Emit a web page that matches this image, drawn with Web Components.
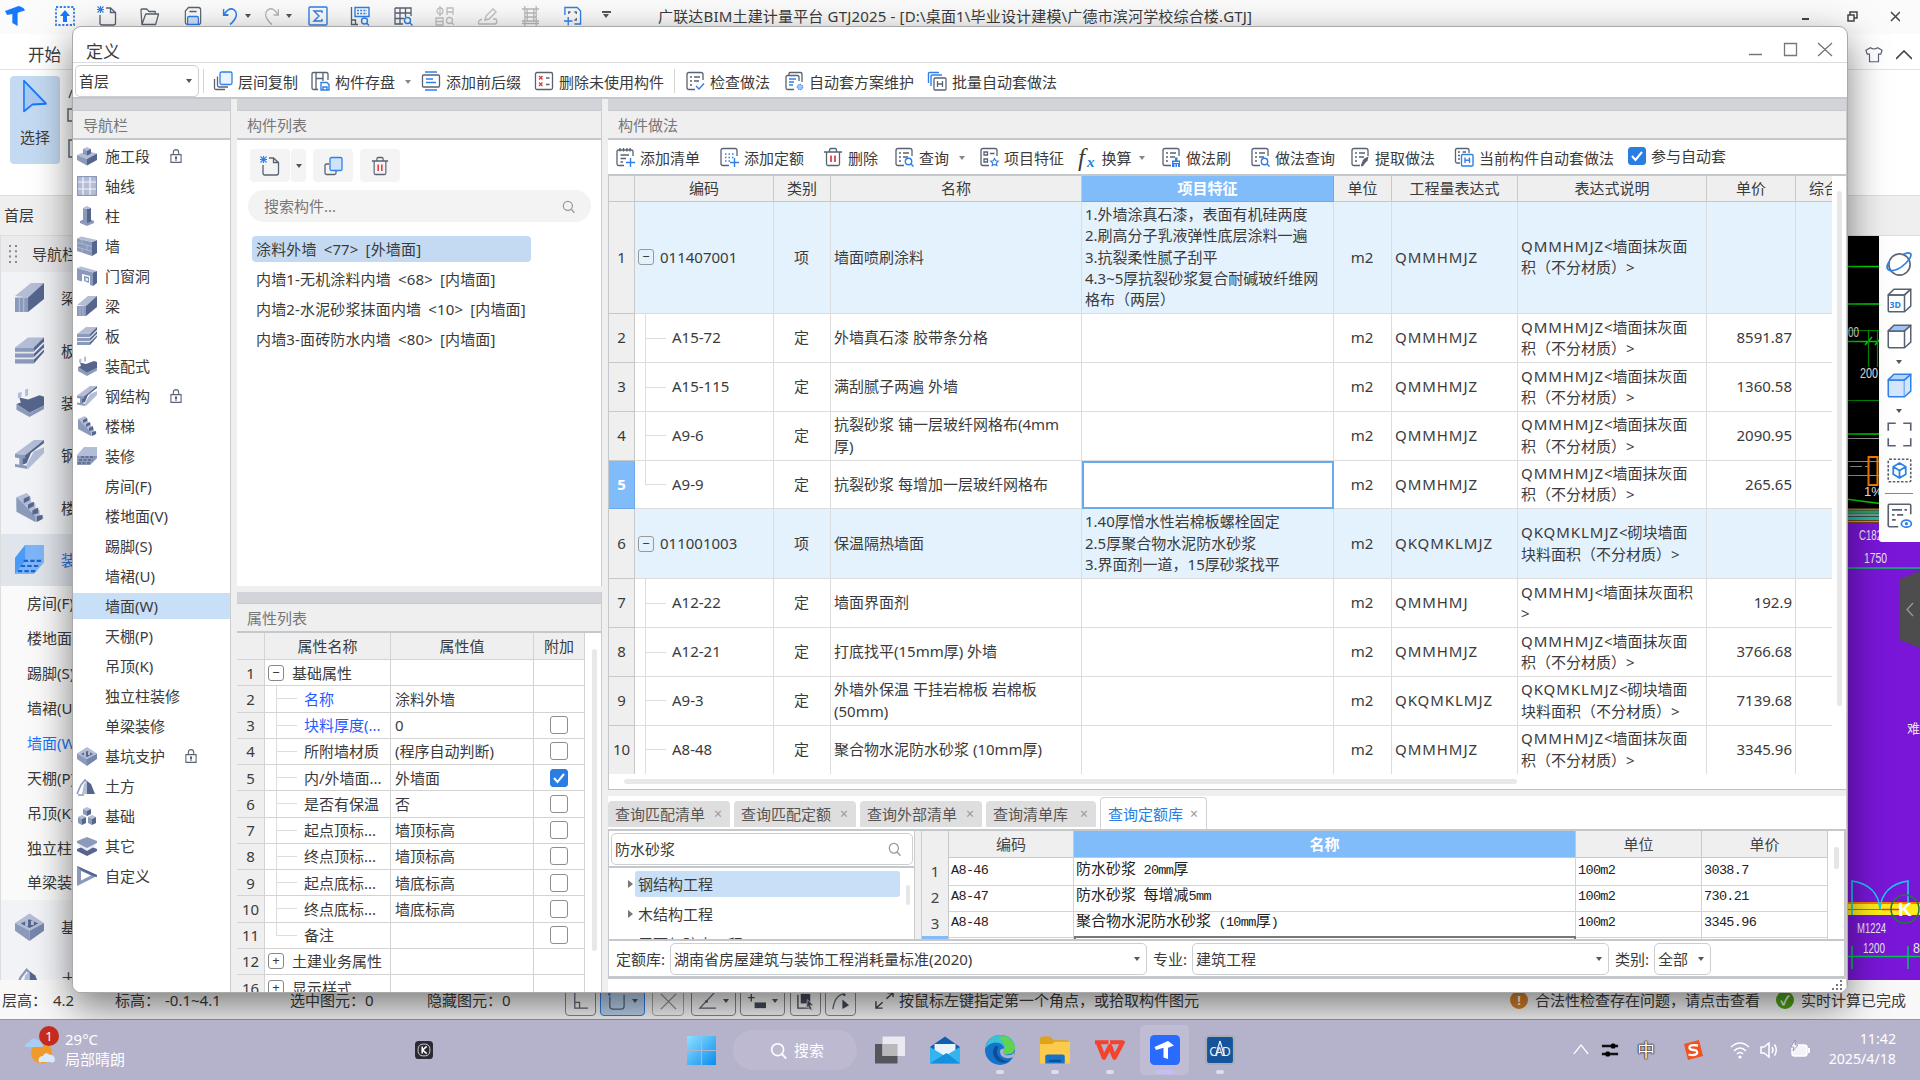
<!DOCTYPE html>
<html lang="zh-CN">
<head>
<meta charset="utf-8">
<title>广联达BIM土建计量平台 GTJ2025</title>
<style>
    html, body {
        margin: 0;
        width: 1920px;
        height: 1080px;
        overflow: hidden;
        font-family: "Noto Sans", "Noto Sans CJK SC", sans-serif;
        font-size: 15px;
        line-height: 20px;
        color: #3b3b3b;
        --line: #c4c8cd;
        --cell: #dcdcdc;
        --head: #efefef;
        --pick: #c8dff8;
        --blue: #2a7de1;
    }
</style>
</head>
<body>
<desk-top></desk-top>
<script>
/* ICONOS: viewBox 20x20 */
const G = 'fill="none" stroke="#596273" stroke-width="1.3"';
const B = 'fill="none" stroke="#2f80e8" stroke-width="1.4"';
const L = '#b3bdd5', M = '#8b99ba', D = '#55658c';
const page = `<path ${G} d="M18 9V3.500Q18 1.500 16 1.500H4Q2 1.500 2 3.500V16.500Q2 18.500 4 18.500H10"/>`;
const lines = `<path ${G} d="M5 6h2M9 6h6M5 10h2M9 10h5M5 14h2"/>`;
const cube = (f, t, s = '#596273') => `<g fill="${f}" stroke="${s}" stroke-width="1.2" stroke-linejoin="round"><path d="M1 5.500H14V19H2.500Q1 19 1 17.500Z"/><path d="M14 5.500L19 1V14.500L14 19"/><path fill="${t}" d="M1 5.500L5.500 1H19L14 5.500Z"/></g>`;

const ICONS = {
    logo: '<path fill="#1677ff" d="M0 5L13 0Q15 0 18 2.500L19 4.500L14 6L12 7V20L7 17V8L2 9Z"/>',
    upload: '<rect x="1" y="1" width="18" height="18" fill="none" stroke="#2f80e8" stroke-width="1.800" stroke-dasharray="2.200 1.600"/><path fill="#1677ff" d="M10 4l5 6h-3v6H8v-6H5z"/>',
    newfile: `<path ${G} d="M3 9V17Q3 19 5 19H16.500Q18.500 19 18.500 17V6.500L13.500 2H9M13.500 2V6.500H18.500"/><path stroke="#2f80e8" stroke-width="1.100" d="M3.500 0v7M0 3.500h7M.5 .5l6 6M6.500 .5l-6 6"/>`,
    open: `<path ${G} stroke-linejoin="round" d="M2 18L1 4Q1 3 2 3H7L9.500 5.500H16V8M2 18.500L6 8H19.500L16.500 18.500Z"/>`,
    save: `<path ${G} d="M4 18.500Q1.500 18.500 1.500 16V5L5 1.500H16Q18.500 1.500 18.500 4V16Q18.500 18.500 16 18.500M6 5.500H14"/><path fill="#cfe3fb" stroke="#2f80e8" stroke-width="1.400" d="M4 18.500V12Q4 10.500 5.500 10.500H14.500Q16 10.500 16 12V18.500Z"/>`,
    undo: '<path fill="none" stroke="#2f80e8" stroke-width="1.800" d="M2 3V9H8M2.500 8.500Q8 2 13 3Q18 4.500 18 9Q17 14 10 18.500"/>',
    redo: '<path fill="none" stroke="#b5b5b5" stroke-width="1.500" d="M18 3V9H12M17.500 8.500Q12 2 7 3Q2 4.500 2 9Q3 14 10 18.500"/>',
    sigma: `<rect x="1" y="1" width="18" height="18" rx="1" ${B}/><path ${B} d="M14 7V5H6L11 10L6 15H14V13"/>`,
    calc: `<path ${G} d="M1.500 1V18.500H8M1.500 14H5.500V18"/><path ${B} d="M5 1.500H19V10.500H5Z"/><path ${B} stroke-dasharray="2 1.200" d="M7 4.500H17M7 7.500H17"/><circle cx="14.500" cy="15" r="3" ${B}/><path ${B} d="M16.500 17l2.500 2.500"/>`,
    gridfind: `<path ${G} d="M2 2H18V10M2 2V18H10M2 7H18M2 12.500H11M7 2V18M12.500 2V11"/><circle cx="14.500" cy="14.500" r="3" ${B}/><path ${B} d="M16.500 16.500l3 3"/>`,
    shapes: '<g fill="none" stroke="#c1c1c1" stroke-width="1.300"><circle cx="5" cy="5" r="3"/><path d="M12 9V2H18V9M12 6H18M1 12H8V19H1ZM1 15.500H8M5 0V10"/><circle cx="14.500" cy="14.500" r="3"/><path d="M17 17l2 2"/></g>',
    pencil: '<path fill="none" stroke="#c1c1c1" stroke-width="1.400" d="M7 14L8 10L15 3L18 6L11 13ZM4 13Q-1 15 1 18H17Q20 17 18 13H15"/>',
    fence: '<path fill="none" stroke="#b9b9b9" stroke-width="1.300" d="M4 0V20M16 0V20M1 3H19M1 15H19M4 7H16M4 11H16M6.500 3V15M13.500 3V15M1 17.500H19"/>',
    capture: `<path ${B} stroke-width="1.700" d="M2 9V1.500H15L18.500 5V18H12M5.500 11V19.500M1 15H10"/><path ${G} d="M6 8V6H8M12 6H14V8M14 12V14H12"/>`,
    copyfloor: `<path ${G} d="M1.500 8V17Q1.500 18.500 3 18.500H12M4.500 5.500V14.500Q4.500 16 6 16H15"/><rect x="7" y="1" width="12" height="12.500" rx="1.500" fill="#eaf3ff" stroke="#2f80e8" stroke-width="1.300"/>`,
    store: `<path ${G} d="M18 9V3Q18 1.500 16.500 1.500H3.500Q2 1.500 2 3V17Q2 18.500 3.500 18.500H8M6 1.500V18M6 7.500H13V1.500M13 7.500V10"/><path ${B} d="M11 19V11.500H17L19 13.500V19ZM13 19V16H17V19"/>`,
    prefix: `<rect x="1.500" y="4" width="17" height="12" rx="1" ${G}/><path ${B} d="M4 1H16M4 19H16M5 8H12M5 11.500H15"/>`,
    delunused: `<rect x="1.500" y="1.500" width="17" height="17" rx="1.500" ${G}/><path stroke="#e0373c" stroke-width="1.300" d="M5 5l3.500 3.500M8.500 5L5 8.500M5 11.500l3.500 3.500M8.500 11.500L5 15"/><path ${G} d="M12 7H15.500M12 13.500H15.500"/>`,
    check: `${page}${lines}<path ${B} stroke-width="2" d="M11 15L14 18L19 12.500"/>`,
    autoplan: `<path ${G} d="M5 4V2.500Q5 1.500 6 1.500H16.500Q18 1.500 18 3V11M15 10V6Q15 4.500 13.500 4.500H3.500Q2 4.500 2 6V17Q2 18.500 3.500 18.500H10"/><path ${B} d="M5 8H12M5 11H10M5 14H9"/><circle cx="16" cy="16" r="2.800" fill="#9dc6f8" stroke="#2f80e8" stroke-dasharray="1.500 1"/>`,
    batchauto: `<path ${B} d="M1.500 12V2.500Q1.500 1.500 2.500 1.500H12M4 15V5Q4 4 5 4H15"/><rect x="7" y="7" width="12" height="12" rx="1" ${G}/><path ${G} d="M10.500 10V16M15.500 10V16M10.500 13H15.500"/>`,
    addlist: `<path ${G} d="M18 9V4.500Q18 3 16.500 3H3.500Q2 3 2 4.500V17Q2 18.500 3.500 18.500H9M5 1V4.500M8.500 1V4.500M12 1V4.500M15 1V4.500M5.500 8H14M5.500 11.500H11M5.500 15H8"/><path ${B} stroke-width="1.800" d="M15.500 11V20M11 15.500H20"/>`,
    addquota: `${page}<path ${B} stroke-dasharray="1.500 2" d="M6 7H15M6 10.500H15M6 14H11"/><path ${B} stroke-width="1.800" d="M15.500 11V20M11 15.500H20"/>`,
    trash: `<path ${G} stroke-width="1.500" d="M1 5H19M6.500 5V3Q6.500 1.500 8 1.500H12Q13.500 1.500 13.500 3V5M3.500 5V17Q3.500 18.500 5 18.500H15Q16.500 18.500 16.500 17V5"/><path stroke="#e0373c" stroke-width="1.700" d="M8 8.500V15M12 8.500V15"/>`,
    query: `${page}${lines}<circle cx="14.500" cy="14.500" r="3.200" ${B}/><path ${B} d="M17 17l2.500 2.500"/>`,
    feature: `${page}<path ${G} d="M5 5h3.500v3H5zM11 6.500H15.500M5 12h3.500v3H5z"/><path fill="none" stroke="#2f80e8" stroke-width="1.100" d="M15.500 11.500l1.200 2.300 2.600.4-1.900 1.800.5 2.600-2.400-1.200-2.400 1.200.5-2.600-1.900-1.800 2.600-.4z"/>`,
    brush: `${page}${lines}<path fill="#2f80e8" d="M14 10.500h2.500v3H19V20H11V13.500H14z"/><path stroke="#fff" d="M12.500 15.500H18M14 17V20M16.500 17V20"/>`,
    extract: `${page}${lines}<path fill="#596273" d="M13 13L15 11L18.500 9.500L17.500 14L16 15L13 19L11 19.500L11 18z"/>`,
    currentauto: `<path ${G} d="M15 6V3Q15 1.500 13.500 1.500H3Q1.500 1.500 1.500 3V14.500Q1.500 16 3 16H6M4 5H6M4 8.500H6M4 12H6M8.500 5H12"/><rect x="7.500" y="7.500" width="11.500" height="11.500" rx="1" ${B}/><path ${B} d="M11 10.500V16M15.500 10.500V16M11 13.300H15.500"/>`,
    copy: `<path ${G} d="M6 8H3.500Q2 8 2 9.500V17Q2 18.500 3.500 18.500H11.500Q13 18.500 13 17V15"/><rect x="7" y="1.500" width="12" height="13" rx="1.500" fill="#cfe3fb" stroke="#2f80e8" stroke-width="1.300"/>`,
    find: '<circle cx="9" cy="9" r="7" fill="none" stroke="currentColor" stroke-width="1.900"/><path stroke="currentColor" stroke-width="2.100" d="M14 14L19 19.500"/>',
    lock: '<path fill="none" stroke="#596273" stroke-width="1.800" d="M1.500 8H18.500V19H1.500ZM5.500 8V5Q5.500 1 10 1Q14.500 1 14.500 5V8"/><circle cx="10" cy="12.500" r="2" fill="#596273"/><path stroke="#596273" stroke-width="1.800" d="M10 13v4"/>',
    cursor: '<path fill="#a9c9f0" stroke="#1677ff" stroke-width="1.200" stroke-linejoin="round" d="M1.500 1L18.500 14.500L8 15L1.500 19Z"/>',
    shirt: `<path ${G} d="M6 2Q10 5 14 2L19 5L17.500 9.500H15V18.500H5V9.500H2.500L1 5Z"/>`,

    /* elementos de obra */
    stage: `<path fill="${L}" d="M0 9L10 5L20 7.500L10 13Z"/><path fill="${M}" d="M0 9L10 13V19.500L0 14Z"/><path fill="${D}" d="M10 13L20 7.500V14L10 19.500Z"/><path fill="${M}" d="M6 3V8L10 9.500L14 8V3Z"/><path fill="${L}" d="M6 3L10 1L14 3L10 5Z"/><path fill="${D}" d="M10 5L14 3V7.500L10 9.500Z"/>`,
    axis: `<path fill="${L}" d="M0 0H20V20H0Z"/><path stroke="${M}" stroke-width="1.200" fill="none" d="M.6 .6H19.400V19.400H.6Z"/><path stroke="#f4f6fa" stroke-width="1.200" d="M6 1V19M13 1V19M1 6H19M1 13H19"/>`,
    column: `<path fill="${M}" d="M3 15L10 12L17 15V17L10 20L3 17Z"/><path fill="${M}" d="M6 2L10 3V17L6 15.500Z"/><path fill="${D}" d="M10 3L14 2V15.500L10 17Z"/><path fill="${L}" d="M6 2L10 0L14 2L10 3Z"/>`,
    wall: `<path fill="${M}" d="M0 2.500L15 6V20L0 15Z"/><path fill="${D}" d="M15 6L20 4V17L15 20Z"/><path fill="${L}" d="M0 2.500L4 .5L20 4L15 6Z"/><path stroke="${L}" stroke-width=".8" d="M0 6.500L15 10.500M0 11L15 15.500M5 4V8M10 9V14M5 12.500V16.500"/>`,
    opening: `<path fill="${M}" d="M0 2L16 6.500V20L13 19V10L5 8V15.500L0 14Z"/><path fill="${L}" d="M0 2L4 .5L20 5L16 6.500Z"/><path fill="${D}" d="M16 6.500L20 5V17L16 20Z"/><path fill="${M}" d="M7 10L12 11V17L7 15Z"/><path fill="#eef1f7" d="M8.500 12L11 12.500V15L8.500 14.500Z"/>`,
    beam: `<path fill="${L}" d="M0 9L11 0H20L9 10Z"/><path fill="${M}" d="M0 10H9V20H0Z"/><path fill="${D}" d="M9 10L20 0V11L9 20Z"/><path stroke="${L}" stroke-width=".8" d="M3 10V20M6 10V20"/>`,
    slab: `<path fill="${L}" d="M0 8L9 1H20L13 8Z"/><path fill="${M}" d="M0 8H13V19H0Z"/><path fill="${D}" d="M13 8L20 1V11L13 19Z"/><path stroke="#e3e8f2" stroke-width="1.200" fill="none" d="M0 11.500H13L20 4.500M0 15.500H13L20 8.500"/>`,
    prefab: `<path fill="${L}" d="M2 3.500L4.500 2.500V6L2 7ZM7 1L9 .5V5L7 6Z"/><path fill="${D}" d="M3 6.500L9 8L17 5L20 6V12L10 17L1 11L4 10Z"/><path fill="${M}" d="M1 11L10 17L20 12V14.500L10 20L1 15Z"/>`,
    steel: `<path fill="${L}" d="M0 9.500L13 0H20L7 10.500Z"/><path fill="${D}" d="M7 10.500L20 0V2L11 9L8 16L5 17V11Z"/><path fill="${M}" d="M0 9.500L7 10.500V12.500L5 13V17L8.500 18V20L0 18.500V16.500L3 17V12.500L0 12Z"/><path fill="${L}" d="M8 17L13 8L20 5V9L9 20Z"/>`,
    stairs: `<path fill="${L}" d="M1 3L8 0L11 3V6L14 7V10L17 12V15L20 17L14 20L1 10Z"/><path fill="${M}" d="M1 3V13L14 20V16Z"/><path fill="${D}" d="M6 4L10 2V5L6 7ZM9 8L13 6V9L9 11ZM12 12L16 10V14L12 15ZM15 16L19 15V18L15 20Z"/>`,
    finish: `<path fill="${L}" d="M0 9L7 1H20V12L13 19H0Z"/><path fill="${M}" d="M0 10H20V12L13 19H0Z"/><path stroke="${D}" stroke-width="1.300" stroke-dasharray="3 1.500" d="M4 11H18M2 14H16M1 17H14"/>`,
    finishon: '<path fill="#7db6f8" d="M0 9L7 0H20V12L13 20H0Z"/><path fill="#4b9af5" d="M0 9L7 0V11L0 20Z"/><path stroke="#1b62cf" stroke-width="1.500" stroke-dasharray="3 1.500" d="M6 11H19M4 14.500H17M2 18H14"/>',
    pit: `<path fill="${L}" d="M0 7.500L10 1L20 7.500L10 13Z"/><path fill="${M}" d="M0 7.500L10 13V20L0 13Z"/><path fill="#7686ab" d="M10 13L20 7.500V13L10 20Z"/><path fill="${D}" d="M4 8L10 5L16 8L10 11Z"/><path fill="${L}" d="M7 5h2v5H7zM11 6h2v3h-2z"/>`,
    earth: `<path fill="none" stroke="${M}" stroke-width="1.600" d="M0 18L4 9L8 4L11 7M1 19H7"/><path fill="${D}" d="M10 5L14 8L18 18H10Z"/><path fill="${L}" d="M7 8L10 5V18H5Z"/>`,
    base: `<g fill="${L}"><path d="M6 3L10 1L14 3L10 5ZM1 11L5 9L9 11L5 13ZM11 11L15 9L19 11L15 13Z"/></g><g fill="${M}"><path d="M6 3L10 5V10L6 8ZM1 11L5 13V19L1 17ZM11 11L15 13V19L11 17Z"/></g><g fill="${D}"><path d="M14 3L10 5V10L14 8ZM9 11L5 13V19L9 17ZM19 11L15 13V19L19 17Z"/></g>`,
    other: `<path fill="${D}" d="M0 13L10 9L20 13V15L10 20L0 15Z"/><path fill="#e8ebf3" d="M0 9L20 9L10 15Z"/><path fill="${M}" d="M0 5L10 1L20 5V7L10 12L0 7Z"/>`,
    custom: `<path fill="${M}" d="M0 0L20 9V10L0 20Z"/><path fill="${D}" d="M0 0L20 9V11L16 10L4 4Z"/><path fill="#fff" d="M4 5L14 9.500L4 14.500Z"/>`,

    /* barra de vistas */
    orbit: `<circle cx="10" cy="10" r="8.500" ${G} stroke-width="1.200"/><path fill="none" stroke="#2f80e8" stroke-width="1.400" d="M1.500 8Q-2 14 3 15Q9 15 15 9Q20 4 19 1.500Q17-.5 13 2"/>`,
    cube3d: `${cube('none', 'none')}<text x="2" y="16" font-size="7" font-weight="700" font-family="Noto Sans" fill="#2f80e8">3D</text>`,
    cubetop: cube('none', '#9dc6f8'),
    cubefull: cube('#d3e6fd', '#b5d5fb', '#2f80e8'),
    frame: `<path ${G} d="M1 7V1H7M13 1H19V7M19 13V19H13M7 19H1V13"/>`,
    isolate: `<rect x="1" y="1" width="18" height="18" rx="1" ${G} stroke-dasharray="2 1.300"/><path ${B} stroke-linejoin="round" d="M10 4L15 7V13L10 16L5 13V7ZM5 7L10 10L15 7M10 10V16"/>`,
    eyelist: `<path ${G} d="M19 9V2Q19 1 18 1H2Q1 1 1 2V18Q1 19 2 19H9M4 5.500h8M14 5.500h2M4 9.500h2M8 9.500h5M4 13.500h3"/><ellipse cx="15.500" cy="16.500" rx="4" ry="2.800" ${B}/><circle cx="15.500" cy="16.500" r="1.300" fill="#2f80e8"/>`,

    /* barra de estado */
    st1: `<path ${G} d="M4 1V17H18M4 11H9V17"/>`,
    st2: `<path ${G} d="M3 5V15Q3 18 6 18H15Q18 18 18 15V3"/><circle cx="2.500" cy="2.500" r="1.500" fill="#2f80e8"/>`,
    st3: `<path ${G} d="M2 2L18 18M18 2L2 18"/>`,
    st4: `<path ${G} d="M17 1L2 17H19"/><circle cx="9" cy="10" r="1.500" fill="#596273"/>`,
    st5: '<path stroke="#444c5a" stroke-width="1.400" d="M1 6H8M4.500 2V10"/><path fill="#444c5a" d="M8 11H20V17H8z"/>',
    st6: '<path fill="none" stroke="#444c5a" stroke-width="1.400" d="M2 3V17H14"/><path fill="#444c5a" d="M5 2H15V12H5z"/><path fill="#444c5a" stroke="#ccc" d="M12 8l6 6h-3l2 5-3-1-1-3-2 2z"/>',
    st7: `<path ${G} d="M2 18Q4 3 14 2"/><circle cx="14" cy="3" r="1.500" fill="#596273"/><path fill="#444c5a" d="M12 8L19 14L12 18z"/>`,
    arrows: '<path fill="none" stroke="#444" stroke-width="1.500" d="M1 11V19H8M1.500 18.500L8 12M19 6V1H13M18.500 1.500L12 8"/>',

    /* barra de tareas */
    start: '<defs><linearGradient id="w" x2="1" y2="1"><stop stop-color="#8fe0ff"/><stop offset="1" stop-color="#0a8cf0"/></linearGradient></defs><path fill="url(#w)" d="M0 0H9.600V9.600H0ZM10.400 0H20V9.600H10.400ZM0 10.400H9.600V20H0ZM10.400 10.400H20V20H10.400Z"/>',
    tasks: '<path fill="#55565c" d="M0 6H15V19H0z"/><path fill="#f3f3f6" opacity=".85" d="M5 1H20V14H5z"/><path fill="#b9b9bd" d="M5 6H15V14H5z"/>',
    mail: '<path fill="#0f5fae" d="M0 8L10 1L20 8V12H0Z"/><path fill="#e9f3fb" d="M3 6H17V14H3z"/><path fill="#35b4f0" d="M0 8L10 14L20 8V19H0Z"/><path fill="#1590df" d="M0 19L11 12L20 19z"/>',
    edge: '<circle cx="10" cy="10" r="10" fill="#1673c9"/><path fill="#39c3d8" d="M1 6Q4 0 10 0Q19 0 20 8Q20 13 14 13Q11 12 13 9Q12 5 7 5Q3 5 0 9Z"/><path fill="#63d24d" d="M13 .5Q19 3 20 8Q20 13 14 13Q11 12 13 9Q14 5 9 2Z"/><path fill="#0b4f9c" d="M7 7Q3 12 8 17Q12 20 17 17Q12 18 9 14Q7 11 9 8Z"/><path fill="#b4b0cb" d="M13 9Q11 12 14 13.500Q18 14 20 11L19 15L15 15.500Q10 15 10 11Q10 9 13 9Z"/>',
    folder: '<path fill="#e0a21a" d="M0 3Q0 1 2 1H7L9 3.500H18Q20 4 20 6V9H0Z"/><path fill="#fdcb4b" d="M0 6H8L10 4.500H20V19H0Z"/><path fill="#1673c9" d="M3.500 14Q3.500 13 5 13H15Q16.500 13 16.500 14V19H3.500Z"/><path fill="#0d4d90" d="M6 16.500H14V18H6z"/>',
    wps: '<path fill="none" stroke="#f4422c" stroke-width="3" stroke-linejoin="round" d="M0 4H9M2 4.500L6 16L10 7L13 16L18.500 4H10"/>',
    gtj: '<rect width="20" height="20" rx="3" fill="#2a6bff"/><path fill="#fff" d="M3 8L12 4L16 7L12 8.500V16L9 15V8.500L4 10Z"/>',
    cad: '<rect x=".7" y=".7" width="18.600" height="18.600" rx="2" fill="#15539a" stroke="#a6adb5" stroke-width="1.400"/><text x="10" y="13.700" text-anchor="middle" font-size="8" font-family="Noto Sans" textLength="14.500" fill="#e8f2fb">CAD</text><path fill="none" stroke="#e8f2fb" stroke-width=".8" d="M10 4L7 14M10 4L13 14"/>',
    weather: '<circle cx="11" cy="12" r="7" fill="#f09a2c"/><path fill="#a9cdf5" d="M0 8Q0 5 3 5Q4 1 8 3Q12 3 12 8Z"/><path fill="#d7e9fc" d="M9 17Q9 14 12 14Q13 11 16 13Q20 13 20 17Q19 19 17 18H11Q9 19 9 17Z"/>',
    kapp: '<rect width="20" height="20" rx="4" fill="#2b2a33"/><rect x="3.500" y="3.500" width="13" height="13" rx="5" fill="none" stroke="#ddd" stroke-width="1"/><path fill="none" stroke="#fff" stroke-width="1.700" d="M8 6V14M13 6L8.500 10L13 14"/>',
    up: '<path fill="none" stroke="#fff" stroke-width="1.500" d="M1 14L10 5L19 14"/>',
    toggles: '<path stroke="#111" stroke-width="2.400" d="M1 6H19M1 14H19"/><rect x="11" y="3.500" width="5" height="5" rx="1.500"/><rect x="5" y="11.500" width="5" height="5" rx="1.500"/>',
    sogou: '<path fill="#f4511e" d="M1 4L16 0L20 16L5 20Z"/><path fill="none" stroke="#fff" stroke-width="2.300" d="M15 5.500Q6 4 6.500 8Q7 10 11 10Q15 10.500 14 13.500Q12 16 5.500 14.500"/>',
    wifi: '<path fill="none" stroke="#fff" stroke-width="1.600" d="M1 7Q10-1 19 7M4 11Q10 5 16 11M7 14Q10 11 13 14"/><circle cx="10" cy="17" r="1.600" fill="#fff"/>',
    sound: '<path fill="none" stroke="#fff" stroke-width="1.500" d="M1 7H4L9 3V17L4 13H1ZM12 7Q14 10 12 13M14.500 4.500Q18 10 14.500 15.500"/>',
    battery: '<rect x="2" y="5" width="15" height="11" rx="2.500" fill="#fff" fill-opacity=".85" stroke="#fff" stroke-width="1.500"/><path fill="#fff" d="M18 8H20V13H18z"/><path fill="#fff" stroke="#8b87a8" stroke-width=".8" d="M5 0L1 7H4L3 11L8 5H5Z"/>'
};

/* BASE */
class BaseElement extends HTMLElement {
    constructor() {
        super();
        this.attachShadow({mode: 'open'});
    }
    getTemplate() { return ''; }
    getStyles() { return ''; }
    connectedCallback() {
        const tpl = document.createElement('template');
        tpl.innerHTML = `<style>* { box-sizing: border-box; } ${this.getStyles()}</style>${this.getTemplate()}`;
        this.shadowRoot.replaceChildren(tpl.content.cloneNode(true));
    }
}

/* ICONO */
class UiIcon extends BaseElement {
    getTemplate() {
        return `<svg viewBox="0 0 20 20" preserveAspectRatio="none">${ICONS[this.getAttribute('name')] || ''}</svg>`;
    }
    getStyles() {
        return `
        :host { display: block; flex: none; width: 20px; height: 20px; }
        svg { display: block; width: 100%; height: 100%; overflow: visible; }`;
    }
}
customElements.define('ui-icon', UiIcon);

/* FLECHA DESPLEGABLE */
class UiCaret extends BaseElement {
    getStyles() {
        return `
        :host { display: block; flex: none; width: 0; height: 0; border: 3.500px solid transparent;
            border-top: 4px solid #555; border-bottom: 0; }`;
    }
}
customElements.define('ui-caret', UiCaret);

/* CASILLA */
class CheckBox extends BaseElement {
    getTemplate() {
        return this.hasAttribute('checked')
            ? '<svg viewBox="0 0 18 18"><path fill="none" stroke="#fff" stroke-width="2" d="M4 9L7.500 13L14 5"/></svg>' : '';
    }
    getStyles() {
        return `
        :host { display: block; flex: none; width: 18px; height: 18px; border: 1.500px solid #8e8e8e; border-radius: 3px; background: #fff; }
        :host([checked]) { background: var(--blue); border-color: var(--blue); }
        svg { display: block; margin: -1px; width: 18px; height: 18px; }`;
    }
}
customElements.define('check-box', CheckBox);

/* BOTON DE HERRAMIENTA */
class ToolButton extends BaseElement {
    getTemplate() {
        return `<ui-icon name="${this.getAttribute('icon')}"></ui-icon><span><slot></slot></span>
            ${this.hasAttribute('menu') ? '<ui-caret></ui-caret>' : ''}`;
    }
    getStyles() {
        return `
        :host { display: flex; flex: none; align-items: center; white-space: nowrap; height: 22px; }
        ui-icon { margin-top: -2px; }
        span { margin-left: 5px; }
        ui-caret { margin-left: 10px; opacity: .7; }`;
    }
}
customElements.define('tool-button', ToolButton);

/* PANEL CON TITULO */
class DockPanel extends BaseElement {
    getTemplate() {
        return `<div class="grip"></div><header>${this.getAttribute('title-text')}</header><slot></slot>`;
    }
    getStyles() {
        return `
        :host { display: flex; flex-direction: column; background: #fff; overflow: hidden; min-width: 0; }
        .grip { flex: none; height: 12px; background: #d3d4da; border-bottom: 1px solid #c6cacf; }
        header { flex: none; height: 29px; padding: 4px 0 0 10px; background: var(--head); color: #777; border-bottom: 2px solid var(--line); }`;
    }
}
customElements.define('dock-panel', DockPanel);

/* COMBO */
class ComboBox extends BaseElement {
    getTemplate() { return '<slot></slot><ui-caret></ui-caret>'; }
    getStyles() {
        return `
        :host { display: flex; flex: none; align-items: center; justify-content: space-between; height: 32px;
            padding: 0 6px 0 3px; border: 1.500px solid #cbced2; border-radius: 5px; background: #fff; }`;
    }
}
customElements.define('combo-box', ComboBox);

/* VENTANA PRINCIPAL */
class MainWindow extends BaseElement {
    getTemplate() {
        /* nombre, margen izquierdo, ancho */
        const quick = [
            ['logo', 5, 21], ['upload', 29, 20], ['newfile', 22, 20], ['open', 23, 19], ['save', 25, 18], ['undo', 20, 16], ['caret', 7],
            ['redo', 13, 16], ['caret', 6], ['sigma', 16, 20], ['calc', 22, 20], ['gridfind', 23, 20], ['shapes', 22, 20],
            ['pencil', 23, 20], ['fence', 23, 19], ['capture', 23, 19]
        ];
        const side = [['beam', '梁'], ['slab', '板'], ['prefab', '装配式'], ['steel', '钢结构'], ['stairs', '楼梯'], ['finishon', '装修']];
        const subs = ['房间(F)', '楼地面(V)', '踢脚(S)', '墙裙(U)', '墙面(W)', '天棚(P)', '吊顶(K)', '独立柱装修', '单梁装修'];
        const big = ([n, t]) => `<div class="big ${n}"><ui-icon name="${n}"></ui-icon><span>${t}</span></div>`;
        return `
        <div class="title">
            ${quick.map(([n, m, w]) => n === 'caret'
                ? `<ui-caret style="margin-left:${m}px"></ui-caret>`
                : `<ui-icon name="${n}" style="margin-left:${m}px;width:${w}px"></ui-icon>`).join('')}
            <b></b><ui-caret style="margin-left:-8px"></ui-caret>
            <span class="name">广联达BIM土建计量平台 GTJ2025 - [D:\\桌面1\\毕业设计建模\\广德市滨河学校综合楼.GTJ]</span>
            <svg class="ctl" viewBox="0 0 100 20"><path d="M2 12H9" stroke-width="2"/><path d="M48 8H54V14H48ZM50 8V5H57V11H54"/><path d="M91 5L100 14M100 5L91 14"/></svg>
        </div>
        <div class="tabs"><span>开始</span><i></i><ui-icon name="shirt" style="width:18px;height:17px"></ui-icon>
            <svg width="16" height="10" viewBox="0 0 16 10"><path fill="none" stroke="#444" stroke-width="1.600" d="M0 9L8 1L16 9"/></svg></div>
        <div class="ribbon"><div class="pick"><ui-icon name="cursor"></ui-icon>选择</div>
            <svg width="12" height="90" viewBox="0 0 12 90"><path fill="none" stroke="#596273" stroke-width="1.400" d="M12 14L9 22M12 33H8V45H12M12 64H9V81H12"/></svg></div>
        <div class="floor">首层</div>
        <div class="work">
            <div class="side">
                <div class="head"><svg width="10" height="20" viewBox="0 0 10 20"><path stroke="#888" stroke-width="2" stroke-dasharray="2 3.300" d="M2 1V20M8 1V20"/></svg><span>导航栏</span></div>
                ${side.map(big).join('')}
                <div class="subs">${subs.map(s => `<div class="${s === '墙面(W)' ? 'on' : ''}">${s}</div>`).join('')}</div>
                ${[['pit', '基坑支护'], ['earth', '土方']].map(big).join('')}
            </div>
            <cad-view></cad-view>
        </div>
        <status-bar></status-bar>`;
    }
    getStyles() {
        return `
        :host { display: flex; flex-direction: column; height: 1020px; background: #fff; }
        .title { flex: none; display: flex; align-items: center; height: 34px; padding-bottom: 2px; background: #fbfbfb; }
        .title b { width: 9px; height: 2px; margin: -8px 0 0 20px; background: #555; }
        .name { margin-left: 49px; white-space: nowrap; letter-spacing: .17px; }
        .ctl { margin: 1px 20px 0 auto; width: 100px; height: 20px; fill: none; stroke: #444; stroke-width: 1.500; }
        .tabs { flex: none; display: flex; align-items: center; height: 36px; padding: 6px 8px 0 28px; border-bottom: 1px solid #e3e3e3; font-size: 16.500px; }
        .tabs i { flex: 1; }
        .tabs svg { margin-left: 13px; }
        .ribbon { flex: none; display: flex; height: 125px; padding: 6px 10px; }
        .pick { display: flex; flex-direction: column; align-items: center; gap: 14px; width: 50px; height: 88px; padding-top: 3px; border-radius: 4px; background: #c3daf2; }
        .pick ui-icon { width: 26px; height: 34px; margin-top: 0; }
        .floor { flex: none; height: 41px; padding: 9px 4px; background: #efefef; border: 1px solid #ddd; border-width: 1px 0; }
        .work { flex: 1; display: flex; min-height: 0; justify-content: space-between; }
        .side { width: 90px; overflow: hidden; background: #f1f3f6; white-space: nowrap; border-left: 1px solid #ddd; }
        .head { display: flex; align-items: center; height: 36px; padding-left: 7px; background: #ebebed; gap: 14px; }
        .big { display: flex; align-items: center; height: 52.400px; padding-left: 14px; gap: 17px; }
        .big ui-icon { width: 29px; height: 29px; margin-top: -1px; }
        .finishon { background: #e0e4eb; color: #2a6fe0; }
        .subs { background: #fafafa; padding: 0; }
        .subs div { height: 34.900px; padding: 7px 0 0 26px; }
        .on { color: #1677ff; }
        cad-view { width: 90px; }`;
    }
}
customElements.define('main-window', MainWindow);

/* LIENZO DE DIBUJO */
class CadView extends BaseElement {
    getTemplate() {
        const ic = n => `<ui-icon name="${n}"></ui-icon>`;
        return `
        <svg viewBox="1830 235 90 745" width="90" height="745">
            <path fill="#000" d="M1830 235H1920V522H1830z"/>
            <path fill="#7916d8" d="M1830 522H1920V980H1830z"/>
            <g stroke="#00d400" stroke-width="1.500" fill="none"><path d="M1830 265.500H1880M1830 303H1880M1830 340.500H1880M1865 344L1872 336M1875 344L1880 338M1830 433H1880M1830 496L1880 502.500"/><path stroke="#008a00" stroke-width="1.200" d="M1830 329.500H1880M1830 399.500H1880M1868.500 329V366M1877.500 329V366"/></g>
            <path stroke="#999" d="M1830 437.500H1880M1830 460.500H1880M1830 474.500H1880M1850 465.500H1862M1865 465.500H1868"/>
            <rect x="1868.500" y="456" width="9" height="28" fill="none" stroke="#f57c00" stroke-width="2"/>
            <path stroke-width="2" stroke="#a5742c" d="M1830 508.500H1880"/><path stroke-width="3" stroke="#2f9c6c" d="M1830 511H1880"/>
            <path stroke-width="3" stroke="#6f9a90" d="M1830 514H1880"/><path stroke-width="3" stroke="#22b7a8" d="M1830 517.500H1880"/><path stroke-width="2" stroke="#e58b2a" d="M1830 520.500H1880"/>
            <path stroke="#00c853" stroke-width="1.500" d="M1830 567H1920"/>
            <path fill="#4d4d4d" d="M1920 570L1900 578V639L1920 647z"/><path fill="none" stroke="#999" stroke-width="1.300" d="M1913 602L1907 608.500L1913 615"/>
            <path fill="#ffeb1a" d="M1830 902H1920V914H1830z"/><path stroke="#f57c00" stroke-width="2" d="M1830 902H1920"/><path stroke="#777" d="M1830 908.500H1890"/><path stroke="#e53a1a" stroke-width="1.500" d="M1882 908.500H1900"/>
            <path fill="none" stroke="#12cdf0" stroke-width="1.600" d="M1852 914V880Q1878 884 1880 908Q1882 884 1908 880V905"/>
            <circle cx="1905" cy="908" r="14" fill="none" stroke="#1f7a3a" stroke-width="1.500"/>
            <path stroke="#00c853" stroke-width="1.500" d="M1830 955.500H1920M1852 945V968M1908 945V968"/>
            <g fill="#e8e8e8" font-family="Liberation Sans" font-size="15">
                <text x="1848" y="336" textLength="11" lengthAdjust="spacingAndGlyphs">00</text><text x="1860" y="377" textLength="18" lengthAdjust="spacingAndGlyphs">200</text>
                <text x="1864" y="495" font-size="13">1%</text><text x="1859" y="539" textLength="23" lengthAdjust="spacingAndGlyphs">C182</text>
                <text x="1864" y="562" textLength="23" lengthAdjust="spacingAndGlyphs">1750</text><text x="1857" y="932" textLength="29" lengthAdjust="spacingAndGlyphs">M1224</text>
                <text x="1863" y="952" textLength="22" lengthAdjust="spacingAndGlyphs">1200</text><text x="1913" y="952" textLength="7" lengthAdjust="spacingAndGlyphs">8</text>
                <text x="1898" y="915" font-size="19" fill="#fff" font-weight="700">K</text>
                <text x="1907" y="732" font-family="Noto Sans CJK SC" font-size="13">难</text>
            </g>
        </svg>
        <div class="bar">
            ${ic('orbit')}${ic('cube3d')}${ic('cubetop')}<ui-caret></ui-caret>${ic('cubefull')}<ui-caret></ui-caret>${ic('frame')}${ic('isolate')}<hr>${ic('eyelist')}
        </div>`;
    }
    getStyles() {
        return `
        :host { display: block; position: relative; overflow: hidden; }
        svg { display: block; }
        .bar { position: absolute; top: 0; right: 0; width: 41px; height: 306px; background: #fff; border-radius: 0 0 0 3px; display: flex; flex-direction: column; align-items: center; padding: 16px 1px 0 0; }
        .bar ui-icon { width: 25px; height: 25px; margin-bottom: 11px; }
        .bar ui-caret { margin: 0 0 9px; }
        hr { width: 28px; border: 0; border-top: 1.500px solid #888; margin: -1px 0 9px; }`;
    }
}
customElements.define('cad-view', CadView);

/* BARRA DE ESTADO */
class StatusBar extends BaseElement {
    getTemplate() {
        const btn = [['st1', 31, 0], ['st2', 45, 1], ['st3', 32, 0], ['st4', 45, 1], ['st5', 45, 1], ['st6', 31, 0], ['st7', 31, 0]];
        return `
        <span style="width:51px">层高：</span><span style="width:62px">4.2</span><span style="width:50px">标高：</span><span style="width:125px">-0.1~4.1</span>
        <span style="width:75px">选中图元：</span><span style="width:62px">0</span><span style="width:75px">隐藏图元：</span><span style="width:63px">0</span>
        ${btn.map(([n, w, c]) => `<div class="btn ${n}" style="width:${w}px"><ui-icon name="${n}"></ui-icon>${c ? '<ui-caret></ui-caret>' : ''}</div>`).join('')}
        <ui-icon name="arrows" style="margin:0 5px 0 15px;width:19px;height:17px"></ui-icon><span>按鼠标左键指定第一个角点，或拾取构件图元</span>
        <i></i><b style="background:#d9822b">!</b><span style="width:241px">合法性检查存在问题，请点击查看</span><b style="background:#4ea317">✓</b><span>实时计算已完成</span>`;
    }
    getStyles() {
        return `
        :host { display: flex; flex: none; align-items: center; height: 40px; padding: 1px 14px 0 2px; background: #f8f8f8; border-bottom: 1px solid #999; white-space: nowrap; }
        span { flex: none; }
        i { flex: 1; }
        b { flex: none; width: 18px; height: 18px; margin-right: 7px; border-radius: 50%; color: #fff; font-size: 13px; line-height: 18px; text-align: center; }
        .btn { flex: none; display: flex; align-items: center; justify-content: space-evenly; height: 32px; margin-right: 4.200px; padding-top: 2px; border: 1.500px solid #888; border-radius: 4px; }
        .btn ui-icon { width: 19px; height: 19px; }
        .st2 { background: #bcd4f0; border-color: #2f80e8; margin-right: 7px; }
        .st3 { margin-right: 7px; opacity: .7; }`;
    }
}
customElements.define('status-bar', StatusBar);

/* ARBOL DE NAVEGACION */
class NavTree extends BaseElement {
    getTemplate() {
        const items = [
            ['施工段', 'stage', 1], ['轴线', 'axis'], ['柱', 'column'], ['墙', 'wall'], ['门窗洞', 'opening'], ['梁', 'beam'], ['板', 'slab'],
            ['装配式', 'prefab'], ['钢结构', 'steel', 1], ['楼梯', 'stairs'], ['装修', 'finish'], ['房间(F)'], ['楼地面(V)'], ['踢脚(S)'],
            ['墙裙(U)'], ['墙面(W)'], ['天棚(P)'], ['吊顶(K)'], ['独立柱装修'], ['单梁装修'], ['基坑支护', 'pit', 1], ['土方', 'earth'],
            ['基础', 'base'], ['其它', 'other'], ['自定义', 'custom']
        ];
        return items.map(([t, icon, lock]) => `
            <div class="${t === '墙面(W)' ? 'on' : ''}"><ui-icon name="${icon || ''}"></ui-icon><span>${t}</span>
            ${lock ? '<ui-icon class="lock" name="lock"></ui-icon>' : ''}</div>`).join('');
    }
    getStyles() {
        return `
        :host { display: block; padding-top: 3px; }
        div { display: flex; align-items: center; height: 26px; margin-bottom: 4px; padding-left: 4px; }
        ui-icon { margin-top: -1px; }
        span { margin-left: 8px; }
        .on { background: var(--pick); }
        .lock { width: 12px; height: 14px; margin-left: 20px; }`;
    }
}
customElements.define('nav-tree', NavTree);

/* LISTA DE COMPONENTES */
class ComponentList extends BaseElement {
    getTemplate() {
        const items = ['涂料外墙 &lt;77&gt; [外墙面]', '内墙1-无机涂料内墙 &lt;68&gt; [内墙面]', '内墙2-水泥砂浆抹面内墙 &lt;10&gt; [内墙面]', '内墙3-面砖防水内墙 &lt;80&gt; [内墙面]'];
        return `
        <div class="tools">
            <div class="btn"><ui-icon name="newfile"></ui-icon></div><div class="btn arrow"><ui-caret></ui-caret></div>
            <div class="btn gap"><ui-icon name="copy"></ui-icon></div><div class="btn gap"><ui-icon name="trash" style="width:18px"></ui-icon></div>
        </div>
        <div class="find"><span>搜索构件...</span><ui-icon name="find"></ui-icon></div>
        ${items.map((t, i) => `<div class="item ${i ? '' : 'on'}">${t}</div>`).join('')}`;
    }
    getStyles() {
        return `
        :host { display: block; padding: 9px 11px 0 12px; }
        .tools { display: flex; height: 33px; padding-left: 1px; }
        .btn { display: flex; align-items: center; justify-content: center; width: 40px; border-radius: 4px; background: #f4f4f4; }
        .arrow { width: 15px; margin-left: 1px; }
        .gap { margin-left: 7px; }
        .find { display: flex; align-items: center; justify-content: space-between; height: 32px; margin: 8px -1px 14px -1px; padding: 0 16px; border-radius: 16px; background: #f3f3f3; color: #777; }
        .find ui-icon { width: 13px; height: 13px; color: #999; }
        .item { width: 279px; height: 26px; margin: 0 0 4px 3px; padding: 3px 4px; border-radius: 4px; white-space: nowrap; letter-spacing: .15px; word-spacing: 3px; }
        .on { background: #c3daf2; }`;
    }
}
customElements.define('component-list', ComponentList);

/* TABLA DE PROPIEDADES */
class PropertyGrid extends BaseElement {
    getTemplate() {
        const rows = [
            [1, '基础属性', '', '-'], [2, '名称', '涂料外墙', 'x', 1], [3, '块料厚度(...', '0', 0, 1], [4, '所附墙材质', '(程序自动判断)', 0], [5, '内/外墙面...', '外墙面', 'c'],
            [6, '是否有保温', '否', 0], [7, '起点顶标...', '墙顶标高', 0], [8, '终点顶标...', '墙顶标高', 0], [9, '起点底标...', '墙底标高', 0],
            [10, '终点底标...', '墙底标高', 0], [11, '备注', '', 0], [12, '土建业务属性', '', '+'], [16, '显示样式', '', '+']
        ];
        return `
        <div class="table">
            <div class="row head"><b></b><b>属性名称</b><b>属性值</b><b>附加</b></div>
            ${rows.map(([n, name, val, k, link]) => {
                const group = k === '-' || k === '+';
                return `<div class="row"><b>${n}</b>
                <span class="${link ? 'link' : ''}">${group ? `<i class="box">${k === '-' ? '−' : '+'}</i>` : `<i class="branch ${n === 11 ? 'last' : ''}"></i>`}${name}</span>
                <span class="val">${val}</span><span class="chk">${group || k === 'x' ? '' : `<check-box ${k === 'c' ? 'checked' : ''}></check-box>`}</span></div>`;
            }).join('')}
        </div>
        <div class="bar"></div>`;
    }
    getStyles() {
        return `
        :host { display: flex; flex: 1; min-height: 0; overflow: hidden; }
        .table { width: 348px; }
        .row { display: grid; grid-template-columns: 28px 126px 143px 51px; height: 26.250px; white-space: nowrap; }
        .row > * { display: flex; align-items: center; border: solid #d3d3d3; border-width: 0 1px 1px 0; overflow: hidden; }
        .head { height: 27px; }
        b { justify-content: center; background: var(--head); font-weight: 400; }
        .link { color: #1f5bff; }
        .box { width: 16px; height: 16px; margin: 0 8px 0 3px; border: 1.500px solid #888; border-radius: 3px; font-style: normal; font-size: 13px; line-height: 12px; text-align: center; }
        .branch { width: 21px; height: 100%; margin: 0 7px 0 11px; background: linear-gradient(#ddd, #ddd) 0 0 / 1px 100% no-repeat, linear-gradient(#ddd, #ddd) 0 50% / 100% 1px no-repeat; }
        .last { background-size: 1px 50%, 100% 1px; }
        .val { padding-left: 4px; }
        .chk { justify-content: center; }
        .bar { width: 5px; height: 302px; margin: 16px 0 0 7px; border-radius: 3px; background: #e8e8e8; }`;
    }
}
customElements.define('property-grid', PropertyGrid);

/* TABLA DE MEDICIONES */
class QuotaGrid extends BaseElement {
    getTemplate() {
        const wall = 'QMMHMJZ<墙面抹灰面\n积（不分材质）>', block = 'QKQMKLMJZ<砌块墙面\n块料面积（不分材质）>';
        const heads = ['', '编码', '类别', '名称', '项目特征', '单位', '工程量表达式', '表达式说明', '单价', '综合'];
        const rows = [
            [112.5, '011407001', '项', '墙面喷刷涂料', '1.外墙涂真石漆，表面有机硅两度\n2.刷高分子乳液弹性底层涂料一遍\n3.抗裂柔性腻子刮平\n4.3~5厚抗裂砂浆复合耐碱玻纤维网\n格布（两层）', 'QMMHMJZ', wall, ''],
            [49, 'A15-72', '定', '外墙真石漆 胶带条分格', '', 'QMMHMJZ', wall, '8591.87'],
            [49, 'A15-115', '定', '满刮腻子两遍 外墙', '', 'QMMHMJZ', wall, '1360.58'],
            [48.5, 'A9-6', '定', '抗裂砂浆 铺一层玻纤网格布(4mm\n厚)', '', 'QMMHMJZ', wall, '2090.95'],
            [48.5, 'A9-9', '定', '抗裂砂浆 每增加一层玻纤网格布', '', 'QMMHMJZ', wall, '265.65'],
            [70, '011001003', '项', '保温隔热墙面', '1.40厚憎水性岩棉板螺栓固定\n2.5厚聚合物水泥防水砂浆\n3.界面剂一道，15厚砂浆找平', 'QKQMKLMJZ', block, ''],
            [49, 'A12-22', '定', '墙面界面剂', '', 'QMMHMJ', 'QMMHMJ<墙面抹灰面积\n>', '192.9'],
            [49, 'A12-21', '定', '打底找平(15mm厚) 外墙', '', 'QMMHMJZ', wall, '3766.68'],
            [48.5, 'A9-3', '定', '外墙外保温 干挂岩棉板 岩棉板\n(50mm)', '', 'QKQMKLMJZ', block, '7139.68'],
            [49, 'A8-48', '定', '聚合物水泥防水砂浆 (10mm厚)', '', 'QMMHMJZ', wall, '3345.96']
        ];
        /* una caja por linea; los codigos en mayusculas van algo mas abiertos */
        const text = s => `<div>${s.split('\n').map(l => `<p>${l.replace(/</g, '&lt;').replace(/^>|>$/g, '&gt;').replace(/^(Q[A-Z]+)/, '<em>$1</em>')}</p>`).join('')}</div>`;
        return `
        <div class="body"><div class="table">
            <div class="row head">${heads.map((h, i) => `<b class="${i === 4 ? 'sel' : ''}">${h}</b>`).join('')}</div>
            ${rows.map(([h, code, kind, name, feat, expr, desc, price], i) => {
                const item = kind === '项';
                return `<div class="row ${item ? 'item' : ''}" style="height:${h}px"><b class="${i === 4 ? 'sel' : ''}">${i + 1}</b>
                <span>${item ? '<i class="box">−</i>' : `<i class="branch ${i === 4 ? 'last' : ''}"></i>`}${code}</span>
                <span class="mid">${kind}</span><span class="pad">${text(name)}</span><span class="pad ${i === 4 ? 'focus' : ''}">${text(feat)}</span>
                <span class="mid">m2</span><span class="pad">${text(expr)}</span><span class="pad">${text(desc)}</span><span class="num">${price}</span><span></span></div>`;
            }).join('')}
        </div><div class="vbar"></div></div>
        <div class="hbar"></div>`;
    }
    getStyles() {
        return `
        :host { display: block; flex: none; height: 614px; border-left: 1px solid var(--line); border-bottom: 1px solid #bfc3c7; }
        .body { display: flex; height: 598px; overflow: hidden; }
        .table { width: 1223px; }
        .row { display: grid; grid-template-columns: 26px 139px 57px 251px 252px 58px 126px 189px 89px 36px; }
        .row > * { display: flex; align-items: center; border: solid var(--cell); border-width: 0 1px 1px 0; white-space: pre; line-height: 21.400px; overflow: hidden; }
        .head { height: 25.500px; }
        .row > b { justify-content: center; font-weight: 400; background: var(--head); border-color: #c8c8c8; }
        .head > b:last-child { justify-content: flex-start; padding-left: 13px; }
        .row > b.sel { background: #80bbfa; color: #fff; font-weight: 700; border-color: #6ba9ea; }
        .item { background: #e4f2fe; }
        p { margin: 0; height: 21.400px; }
        .mid { justify-content: center; padding-right: 1px; }
        .pad { padding-left: 3px; }
        .num { justify-content: flex-end; padding-right: 3px; }
        .focus { border: 2px solid #69a9ec !important; }
        .row > :last-child { border-right: 0; }
        em { font-style: normal; letter-spacing: .95px; }
        .box { width: 16px; height: 16px; margin: 0 6px 0 3px; border: 1.500px solid #999; border-radius: 3px; font-style: normal; font-size: 13px; line-height: 12px; text-align: center; }
        .branch { width: 21px; height: 100%; margin: 0 6px 0 10px; background: linear-gradient(#ddd, #ddd) 0 0 / 1px 100% no-repeat, linear-gradient(#ddd, #ddd) 0 50% / 100% 1px no-repeat; }
        .last { background-size: 1px 50%, 100% 1px; }
        .vbar { width: 5px; height: 515px; margin: 15px 0 0 5px; border-radius: 3px; background: #e8e8e8; }
        .hbar { width: 893px; height: 5px; margin: 5px 0 0 15px; border-radius: 3px; background: #e8e8e8; }`;
    }
}
customElements.define('quota-grid', QuotaGrid);

/* CONSULTA DE PRECIOS */
class QueryPanel extends BaseElement {
    getTemplate() {
        const tabs = [['查询匹配清单', 122], ['查询匹配定额', 122], ['查询外部清单', 122], ['查询清单库', 110], ['查询定额库', 107]];
        const rows = [['A8-46', '防水砂浆 20mm厚', '3038.7'], ['A8-47', '防水砂浆 每增减5mm', '730.21'], ['A8-48', '聚合物水泥防水砂浆 (10mm厚)', '3345.96']];
        const half = s => s.replace(/[\x20-\x7e]+/g, '<tt>$&</tt>');
        return `
        <div class="tabs">${tabs.map(([t, w], i) => `<div class="${i === 4 ? 'on' : ''}" style="width:${w}px">${t}<s>×</s></div>`).join('')}</div>
        <div class="main">
            <div class="left">
                <div class="find"><span>防水砂浆</span><ui-icon name="find"></ui-icon></div>
                <div class="tree"><div class="list">
                    <div><i></i><span class="pick">钢结构工程</span></div><div><i></i><span>木结构工程</span></div><div><i></i><span>屋面与防水工程</span></div>
                </div><div class="bar"></div></div>
            </div>
            <div class="split"></div>
            <div class="table">
                <div class="row head"><b></b><b>编码</b><b class="sel">名称</b><b>单位</b><b>单价</b></div>
                ${rows.map(([c, n, p], i) => `<div class="row"><b>${i + 1}</b><span>${half(c)}</span><span>${half(n)}</span><span>${half('100m2')}</span><span>${half(p)}</span></div>`).join('')}
                <div class="row"><b class="sel"></b><span></span><span class="focus"></span><span></span><span></span></div>
            </div>
            <div class="bar r"></div>
        </div>
        <div class="foot">
            <label>定额库:</label><combo-box style="width:477px">湖南省房屋建筑与装饰工程消耗量标准(2020)</combo-box>
            <label>专业:</label><combo-box style="width:417px">建筑工程</combo-box>
            <label>类别:</label><combo-box style="width:57px">全部</combo-box>
        </div>
        <div class="end"><svg width="10" height="10" viewBox="0 0 10 10"><path fill="#777" d="M8 0h2v2H8zM4 4h2v2H4zM8 4h2v2H8zM0 8h2v2H0zM4 8h2v2H4zM8 8h2v2H8z"/></svg></div>`;
    }
    getStyles() {
        return `
        :host { display: flex; flex: 1; flex-direction: column; min-height: 0; border-top: 6px solid #efefef; background: #fff; }
        .tabs { flex: none; display: flex; align-items: flex-end; height: 33px; gap: 4px; }
        .tabs div { display: flex; align-items: center; justify-content: space-between; height: 26px; margin-bottom: 2px; padding: 0 8px 0 7px; border-radius: 4px 4px 0 0; background: #dedede; color: #555; }
        .tabs .on { height: 32px; margin: 0; background: #fff; border: 1.500px solid #cfd3d7; border-bottom: 0; color: var(--blue); }
        s { text-decoration: none; color: #999; font-size: 14px; }
        .main { flex: none; display: flex; height: 112px; border: 2px solid var(--line); border-left-width: 1px; overflow: hidden; }
        .left { flex: none; width: 306px; border-right: 1px solid #ccc; }
        .find { display: flex; align-items: center; justify-content: space-between; height: 32px; margin: 2px 1px 1px 2px; padding: 0 11px 0 3px; border: 1.500px solid #cbced2; border-radius: 5px; }
        .find ui-icon { width: 13px; height: 14px; color: #999; }
        .tree { display: flex; height: 80px; border-top: 2px solid var(--line); overflow: hidden; }
        .list { width: 291px; padding: 3px 0 0 19px; }
        .list div { display: flex; align-items: center; height: 30px; margin-top: -2px; margin-bottom: 2px; }
        .list i { border: 4px solid transparent; border-left: 5px solid #777; border-right: 0; margin-right: 2px; }
        .list span { flex: 1; padding: 3px; border-radius: 3px; }
        .pick { background: var(--pick); }
        .bar { width: 4px; height: 20px; margin: 17px 0 0 6px; border-radius: 2px; background: #e6e6e6; }
        .r { margin: 16px 0 0 6px; width: 5px; height: 22px; }
        .split { flex: none; width: 7px; background: #efefef; border-right: 1px solid #ccc; }
        .table { flex: none; width: 906px; }
        .row { display: grid; grid-template-columns: 27px 125px 502px 126px 126px; height: 26.200px; }
        .row > * { border: solid #d3d3d3; border-width: 0 1px 1px 0; padding: 0 2px; line-height: 23px; white-space: pre; color: #222; }
        .head { height: 26px; }
        .row > b { padding: 0; text-align: center; font-weight: 400; line-height: 28px; background: var(--head); color: #444; border-color: #c8c8c8; }
        .head > b { line-height: 26px; }
        .row > b.sel { background: #80bbfa; color: #fff; font-weight: 700; }
        .row > .focus { border: 2px solid #777; }
        tt { font-family: "Liberation Mono", monospace; font-size: 13.500px; letter-spacing: -.65px; }
        .foot { flex: none; display: flex; align-items: center; height: 38px; padding: 0 0 0 7px; border: solid var(--line); border-width: 0 2px 3px 1px; }
        label { width: 54px; }
        combo-box + label { width: 45px; padding-left: 6px; white-space: nowrap; }
        .end { display: flex; justify-content: flex-end; padding: 1px 4px; }`;
    }
}
customElements.define('query-panel', QueryPanel);

/* VENTANA DE DEFINICION */
class DefineDialog extends BaseElement {
    getTemplate() {
        const top = [['copyfloor', '层间复制', 97], ['store', '构件存盘', 111, 1], ['prefix', '添加前后缀', 113], ['delunused', '删除未使用构件', 141]];
        const top2 = [['check', '检查做法', 99], ['autoplan', '自动套方案维护', 143], ['batchauto', '批量自动套做法', 140]];
        const acts = [['addlist', '添加清单', 104], ['addquota', '添加定额', 104], ['trash', '删除', 71], ['query', '查询', 85, 1], ['feature', '项目特征', 99], ['fx', '换算', 83, 1],
            ['brush', '做法刷', 89], ['query', '做法查询', 100], ['extract', '提取做法', 104], ['currentauto', '当前构件自动套做法', 174]];
        const btn = ([i, t, w, m]) => i === 'fx'
            ? `<div class="fx" style="width:${w}px"><em>f</em><sub>x</sub><span>${t}</span><ui-caret></ui-caret></div>`
            : `<tool-button icon="${i}" style="width:${w}px" ${m ? 'menu' : ''}>${t}</tool-button>`;
        return `
        <div class="title">定义<svg width="84" height="16" viewBox="0 0 84 16"><path d="M0 13.500H13M35.500 2.500H47.500V14.500H35.500ZM69 2L83 15M83 2L69 15"/></svg></div>
        <div class="tools"><combo-box style="width:124px">首层</combo-box><hr>${top.map(btn).join('')}<hr class="b">${top2.map(btn).join('')}</div>
        <div class="docks">
            <dock-panel style="width:158px" title-text="导航栏"><nav-tree></nav-tree></dock-panel>
            <div class="col">
                <dock-panel style="height:487px" title-text="构件列表"><component-list></component-list></dock-panel>
                <dock-panel style="flex:1" title-text="属性列表"><property-grid></property-grid></dock-panel>
            </div>
            <dock-panel style="flex:1" title-text="构件做法">
                <div class="acts">${acts.map(btn).join('')}<check-box checked></check-box><span>参与自动套</span></div>
                <quota-grid></quota-grid>
                <query-panel></query-panel>
            </dock-panel>
        </div>`;
    }
    getStyles() {
        return `
        :host { display: flex; flex-direction: column; border: 1px solid #a9a9a9; border-radius: 9px; background: #fff; overflow: hidden; box-shadow: 0 14px 38px rgba(0, 0, 0, .5); }
        .title { flex: none; display: flex; justify-content: space-between; align-items: center; height: 36px; padding: 14px 14px 0 13px; font-size: 17px; border-bottom: 1px solid #d9dce0; }
        .title svg { margin-top: -5px; fill: none; stroke: #777; stroke-width: 1.300; }
        .tools { flex: none; display: flex; align-items: center; height: 36px; padding: 2px 0 0 2px; border-bottom: 2px solid var(--line); }
        .tools combo-box { margin-top: -1px; }
        .tools hr { width: 1px; height: 24px; margin: 0 9px 0 4px; border: 0; background: #d4d4d4; }
        .tools tool-button { margin-top: 1px; }
        .tools .b { margin: 0 10px 0 -1px; }
        .docks { flex: 1; display: flex; gap: 6px; min-height: 0; background: #efefef; }
        .docks > dock-panel, .col > dock-panel { border-right: 1px solid #ccc; }
        .col { display: flex; flex-direction: column; gap: 6px; width: 365px; min-height: 0; }
        .acts { flex: none; display: flex; align-items: center; height: 36px; padding: 1px 0 0 7px; border-bottom: 2px solid var(--line); }
        .acts check-box { margin: -4px 5px 0 0; }
        .acts > span { margin-top: -3px; }
        .fx { flex: none; display: flex; align-items: center; }
        .fx em { margin-right: 1px; font: italic 25px/24px "Liberation Serif", serif; }
        .fx sub { margin: 8px 7px 0 1px; font: italic 700 15px/14px "Liberation Serif", serif; color: var(--blue); }
        .fx ui-caret { margin-left: 8px; opacity: .7; }`;
    }
}
customElements.define('define-dialog', DefineDialog);

/* BARRA DE TAREAS */
class TaskBar extends BaseElement {
    getTemplate() {
        const apps = ['tasks', 'mail', 'edge', 'folder', 'wps', 'gtj', 'cad'];
        return `
        <div class="weather"><div class="wic"><ui-icon name="weather"></ui-icon><b>1</b></div><div>29°C<br>局部晴朗</div></div>
        <ui-icon name="kapp" style="width:18px;height:18px"></ui-icon>
        <ui-icon class="start" name="start"></ui-icon>
        <div class="find"><ui-icon name="find"></ui-icon>搜索</div>
        <div class="apps">${apps.map((n, i) => `<div class="app ${n}"><ui-icon name="${n}"></ui-icon>${i > 1 ? '<i></i>' : ''}</div>`).join('')}</div>
        <div class="tray">
            <ui-icon name="up" style="width:16px"></ui-icon><ui-icon name="toggles" style="width:18px;margin-left:12px"></ui-icon>
            <span>中</span><ui-icon name="sogou" style="margin-left:28px"></ui-icon>
            <ui-icon name="wifi" style="margin-left:27px"></ui-icon><ui-icon name="sound" style="margin-left:10px"></ui-icon><ui-icon name="battery" style="margin-left:10px"></ui-icon>
        </div>
        <div class="clock">11:42<br>2025/4/18</div>`;
    }
    getStyles() {
        return `
        :host { display: flex; align-items: center; height: 60px; padding: 0 24px 0 25px; background: #b5b2cc; color: #fff; }
        .weather { display: flex; width: 390px; gap: 10px; align-items: center; margin-top: -2px; }
        .wic { position: relative; width: 30px; }
        .wic ui-icon { width: 30px; height: 30px; margin-top: 2px; }
        .wic b { position: absolute; left: 14px; top: -7px; width: 20px; height: 20px; border-radius: 50%; background: #c42b1c; font-weight: 400; font-size: 13px; line-height: 20px; text-align: center; }
        .start { width: 29px; height: 29px; margin-left: 254px; }
        .find { display: flex; align-items: center; gap: 7px; width: 124px; height: 40px; margin: 0 5px 0 17px; padding-left: 37px; border-radius: 20px; background: rgba(255, 255, 255, .1); }
        .find ui-icon { width: 17px; height: 17px; }
        .apps { display: flex; }
        .app { display: flex; flex-direction: column; align-items: center; width: 49px; height: 50px; margin: 0 3px; padding-top: 10px; border-radius: 5px; }
        .app ui-icon { width: 30px; height: 30px; }
        .wps ui-icon { height: 26px; margin: 2px 0; }
        .app i { width: 8px; height: 4px; margin-top: 5px; border-radius: 2px; background: #dedcea; }
        .gtj { background: rgba(255, 255, 255, .14); }
        .gtj i { width: 20px; background: #c5bdf5; }
        .tray { display: flex; align-items: center; margin-left: auto; }
        .tray span { margin-left: 18px; font-size: 18px; color: #fff; text-shadow: 0 0 1px #222, 0 0 1px #222, 0 0 1px #222, 0 0 2px #222; }
        .clock { width: 86px; margin-top: -2px; text-align: right; white-space: nowrap; font-size: 14.200px; }`;
    }
}
customElements.define('task-bar', TaskBar);

/* ESCRITORIO */
class DeskTop extends BaseElement {
    getTemplate() { return '<main-window></main-window><define-dialog></define-dialog><task-bar></task-bar>'; }
    getStyles() {
        return `
        :host { display: block; position: relative; width: 1920px; height: 1080px; overflow: hidden; }
        define-dialog { position: absolute; left: 72px; top: 26px; width: 1776px; height: 967px; }
        task-bar { position: relative; }`;
    }
}
customElements.define('desk-top', DeskTop);
</script>
</body>
</html>
